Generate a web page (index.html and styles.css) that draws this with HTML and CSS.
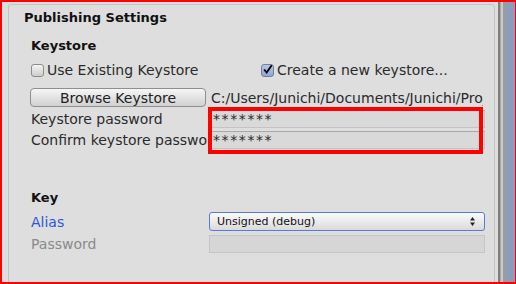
FILE: index.html
```html
<!doctype html>
<html lang="en">
<head>
<meta charset="utf-8">
<title>Publishing Settings</title>
<link rel="stylesheet" href="styles.css">
</head>
<body>
<div class="frame">
  <div class="main">
    <div class="panel">
      <div class="title">Publishing Settings</div>

      <div class="section">
        <div class="heading">Keystore</div>
        <div class="checks">
          <label class="check"><span class="box"></span>Use Existing Keystore</label>
          <label class="check"><span class="box on">
            <svg width="13" height="13" viewBox="0 0 13 13"><path d="M2.5 6.5 L5.5 10 L11.5 1.5" fill="none" stroke="#000" stroke-width="2.2"/></svg>
          </span>Create a new keystore...</label>
        </div>
        <div class="browse">
          <button class="btn">Browse Keystore</button>
          <span class="path">C:/Users/Junichi/Documents/Junichi/Project/keystore</span>
        </div>
        <div class="row pw1">
          <span class="lbl">Keystore password</span>
          <span class="field">*******</span>
        </div>
        <div class="row pw2">
          <span class="lbl">Confirm keystore password</span>
          <span class="field">*******</span>
        </div>
        <div class="mark"></div>
      </div>

      <div class="section key">
        <div class="heading">Key</div>
        <div class="row alias">
          <span class="lbl blue">Alias</span>
          <span class="popup">Unsigned (debug)
            <svg class="arrows" width="5" height="9" viewBox="0 0 5 9"><path d="M2.5 0 L5 3.5 L0 3.5 Z M2.5 9 L5 5.5 L0 5.5 Z" fill="#222"/></svg>
          </span>
        </div>
        <div class="row pass">
          <span class="lbl grey">Password</span>
          <span class="field empty"></span>
        </div>
      </div>
    </div>
  </div>
  <div class="scroll"></div>
</div>
</body>
</html>
```

FILE: styles.css
```css
BODY {
    margin: 0;
    font: 14px "DejaVu Sans", Verdana, sans-serif;
    color: #2a2a2a;
}
.frame {
    display: flex;
    height: 284px;
    box-sizing: border-box;
    border: solid #f00;
    border-width: 2px 1px 2px 2px;
    background: #dedede;
    overflow: hidden;
}
.main {
    flex: 1;
    padding: 2px 3px 0 6px;
}
.scroll {
    width: 17px;
    background: linear-gradient(to right,
        #7e7e7e 0, #7e7e7e 2px,
        #a9a9a9 2px, #a9a9a9 3px,
        #c9c9c9 3px, #c9c9c9 5px,
        #9c9c9c 5px, #9c9c9c 8px,
        #8b9dba 8px);
}
.panel {
    width: 487px;
    height: 320px;
    box-sizing: border-box;
    border: 1px solid #c3c3c3;
    border-radius: 3px;
    padding: 5px 9px 0 22px;
}
.title {
    font-size: 13px;
    font-weight: bold;
    line-height: 16px;
    margin-left: -7px;
    color: #111;
}
.section {
    position: relative;
    padding-top: 12px;
}
.heading {
    font-size: 13px;
    font-weight: bold;
    line-height: 16px;
    color: #111;
}
.checks {
    display: flex;
    margin-top: 8px;
    height: 16px;
    line-height: 16px;
}
.check {
    display: flex;
    align-items: center;
    gap: 3px;
}
.check:first-child {
    width: 230px;
}
.box {
    width: 13px;
    height: 13px;
    box-sizing: border-box;
    border: 1px solid #8c8c8c;
    border-radius: 3px;
    background: linear-gradient(#f4f4f4, #cdcdcd);
    display: flex;
    align-items: center;
    justify-content: center;
}
.box.on {
    background: linear-gradient(#b7c8e8, #8ea6d6);
    border-color: #6f7f9c;
}
.box svg {
    display: block;
    margin-top: -2px;
}
.browse {
    display: flex;
    align-items: center;
    margin-top: 10px;
    margin-left: -1px;
    height: 19px;
}
.btn {
    width: 176px;
    height: 19px;
    padding: 0;
    font: 14px "DejaVu Sans", Verdana, sans-serif;
    color: #222;
    border: 1px solid #8f8f8f;
    border-radius: 4px;
    background: linear-gradient(#f6f6f6, #d0d0d0);
    line-height: 16px;
}
.path {
    margin-left: 5px;
    white-space: nowrap;
    overflow: hidden;
    width: 272px;
    line-height: 16px;
}
.row {
    display: flex;
    align-items: center;
    margin-top: 3px;
}
.lbl {
    width: 178px;
    white-space: nowrap;
    overflow: hidden;
    line-height: 16px;
}
.field {
    width: 276px;
    height: 18px;
    box-sizing: border-box;
    border: 1px solid #c4c4c4;
    border-top-color: #a9a9a9;
    background: #d9d9d9;
    padding-left: 3px;
    font-size: 14px;
    line-height: 16px;
    letter-spacing: 1.6px;
    overflow: hidden;
}
.mark {
    position: absolute;
    left: 177px;
    top: 81px;
    width: 275px;
    height: 47px;
    box-sizing: border-box;
    border: 4px solid #f00;
}
.key {
    padding-top: 41px;
}
.alias {
    margin-top: 6px;
}
.blue {
    color: #2e55dd;
}
.grey {
    color: #8a8a8a;
}
.popup {
    position: relative;
    width: 276px;
    height: 19px;
    box-sizing: border-box;
    border: 1px solid #587ad8;
    border-radius: 3px;
    background: linear-gradient(#fbfbfb, #dadada);
    font-size: 11px;
    line-height: 17px;
    padding-left: 7px;
    color: #111;
}
.arrows {
    position: absolute;
    right: 9px;
    top: 4px;
}
.pass {
    margin-top: 4px;
}
.field.empty {
    background: #d6d6d6;
    border-color: #c6c6c6;
}
```
